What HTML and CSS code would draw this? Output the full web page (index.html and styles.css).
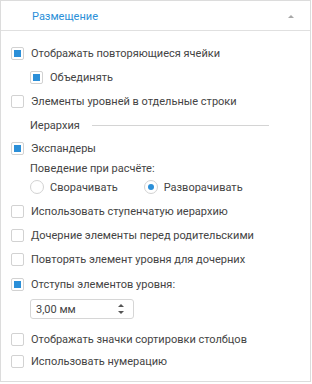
FILE: index.html
```html
<!DOCTYPE html>
<html lang="ru">
<head>
<meta charset="utf-8">
<link rel="stylesheet" href="styles.css">
</head>
<body>
<div class="panel">
  <div class="header">
    <span class="title">Размещение</span>
    <span class="collapse"></span>
  </div>
  <div class="content">
    <label class="row r24"><span class="cb checked"></span><span>Отображать повторяющиеся ячейки</span></label>
    <label class="row r24 indent"><span class="cb checked"></span><span>Объединять</span></label>
    <label class="row r24"><span class="cb"></span><span>Элементы уровней в отдельные строки</span></label>
    <div class="row group indent"><span>Иерархия</span><span class="rule"></span></div>
    <label class="row r20"><span class="cb checked"></span><span>Экспандеры</span></label>
    <div class="row r20 indent plain">Поведение при расчёте:</div>
    <div class="row radios indent">
      <label class="radio-item"><span class="rb"></span><span>Сворачивать</span></label>
      <label class="radio-item second"><span class="rb on"></span><span>Разворачивать</span></label>
    </div>
    <label class="row r24 gap3"><span class="cb"></span><span>Использовать ступенчатую иерархию</span></label>
    <label class="row r24"><span class="cb"></span><span>Дочерние элементы перед родительскими</span></label>
    <label class="row r24"><span class="cb"></span><span>Повторять элемент уровня для дочерних</span></label>
    <label class="row r26"><span class="cb checked"></span><span>Отступы элементов уровня:</span></label>
    <div class="spin">
      <span class="spin-value">3,00 мм</span>
      <span class="spin-arrows"><span class="up"></span><span class="down"></span></span>
    </div>
    <label class="row r24 gap8"><span class="cb"></span><span>Отображать значки сортировки столбцов</span></label>
    <label class="row r20"><span class="cb"></span><span>Использовать нумерацию</span></label>
  </div>
</div>
</body>
</html>
```
FILE: styles.css
```css
html, body {
  margin: 0;
  padding: 0;
  background: #ffffff;
}
body {
  font-family: Roboto, "Liberation Sans", Arial, sans-serif;
  font-size: 11px;
  color: #444444;
}
.panel {
  width: 309px;
  height: 380px;
  border: 1px solid #dcdcdc;
  background: #ffffff;
}
.header {
  border-bottom: 1px solid #e0e0e0;
  display: flex;
  align-items: center;
  padding: 2px 0 0 31px;
  box-sizing: border-box;
  height: 30px;
}
.title {
  color: #2b8fd8;
  flex: 1;
}
.collapse {
  width: 0;
  height: 0;
  border-left: 3px solid transparent;
  border-right: 3px solid transparent;
  border-bottom: 3px solid #a8a8a8;
  margin-right: 16px;
}
.content {
  padding: 10px 0 0 10px;
  display: flex;
  flex-direction: column;
}
.row {
  display: flex;
  align-items: center;
  white-space: nowrap;
}
.r24 { height: 24px; }
.r20 { height: 20px; }
.r26 { height: 26px; }
.gap3 { margin-top: 3px; }
.gap8 { margin-top: 8px; }
.indent { padding-left: 19px; }
.group { height: 25px; }
.rule {
  flex: none;
  width: 177px;
  height: 1px;
  background: #d4d4d4;
  margin-left: 12px;
}
.radios { height: 18px; }
.cb {
  width: 11px;
  height: 11px;
  border: 1px solid #d2d2d2;
  border-radius: 2px;
  margin-right: 7px;
  display: flex;
  align-items: center;
  justify-content: center;
  flex: none;
}
.cb.checked::after {
  content: "";
  width: 7px;
  height: 7px;
  background: #2b8fd8;
}
.radio-item {
  display: flex;
  align-items: center;
}
.radio-item.second { margin-left: 26px; }
.rb {
  width: 12px;
  height: 12px;
  border: 1px solid #d2d2d2;
  border-radius: 50%;
  margin-right: 6px;
  display: flex;
  align-items: center;
  justify-content: center;
  flex: none;
}
.rb.on::after {
  content: "";
  width: 6px;
  height: 6px;
  border-radius: 50%;
  background: #2b8fd8;
}
.spin {
  margin: 2px 0 0 19px;
  width: 97px;
  height: 18px;
  border: 1px solid #d6d6d6;
  border-radius: 3px;
  display: flex;
  align-items: center;
  padding-left: 5px;
  box-sizing: content-box;
}
.spin-value {
  flex: 1;
  font-size: 11px;
}
.spin-arrows {
  display: flex;
  flex-direction: column;
  align-items: center;
  gap: 4px;
  margin-right: 9px;
}
.spin-arrows .up {
  width: 0;
  height: 0;
  border-left: 3px solid transparent;
  border-right: 3px solid transparent;
  border-bottom: 3px solid #555555;
}
.spin-arrows .down {
  width: 0;
  height: 0;
  border-left: 3px solid transparent;
  border-right: 3px solid transparent;
  border-top: 3px solid #555555;
}
```
